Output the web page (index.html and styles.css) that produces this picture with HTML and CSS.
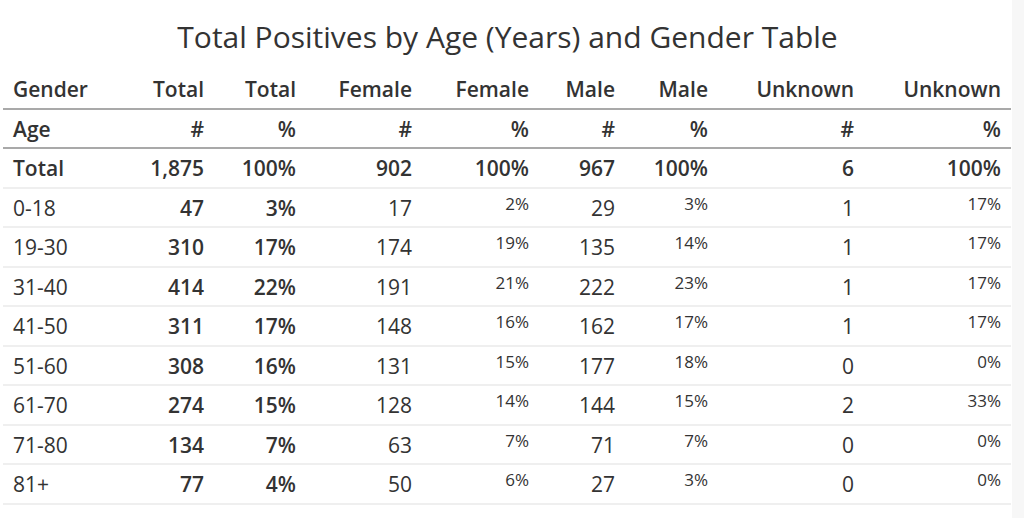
FILE: index.html
```html
<!DOCTYPE html>
<html lang="en">
<head>
<meta charset="utf-8">
<title>Total Positives by Age (Years) and Gender Table</title>
<link rel="stylesheet" href="styles.css">
</head>
<body>
<main class="panel">
  <h1 class="title">Total Positives by Age (Years) and Gender Table</h1>
  <table class="data">
    <colgroup>
      <col class="c-label">
      <col class="c-tn">
      <col class="c-tp">
      <col class="c-fn">
      <col class="c-fp">
      <col class="c-mn">
      <col class="c-mp">
      <col class="c-un">
      <col class="c-up">
    </colgroup>
    <thead>
      <tr class="hrow">
        <th class="lbl">Gender</th><th>Total</th><th>Total</th><th>Female</th><th>Female</th><th>Male</th><th>Male</th><th>Unknown</th><th>Unknown</th>
      </tr>
      <tr class="hrow">
        <th class="lbl">Age</th><th>#</th><th>%</th><th>#</th><th>%</th><th>#</th><th>%</th><th>#</th><th>%</th>
      </tr>
    </thead>
    <tbody>
      <tr class="total">
        <td class="lbl">Total</td><td>1,875</td><td>100%</td><td>902</td><td>100%</td><td>967</td><td>100%</td><td>6</td><td>100%</td>
      </tr>
      <tr>
        <td class="lbl">0-18</td><td class="b">47</td><td class="b">3%</td><td>17</td><td class="sm">2%</td><td>29</td><td class="sm">3%</td><td>1</td><td class="sm">17%</td>
      </tr>
      <tr>
        <td class="lbl">19-30</td><td class="b">310</td><td class="b">17%</td><td>174</td><td class="sm">19%</td><td>135</td><td class="sm">14%</td><td>1</td><td class="sm">17%</td>
      </tr>
      <tr>
        <td class="lbl">31-40</td><td class="b">414</td><td class="b">22%</td><td>191</td><td class="sm">21%</td><td>222</td><td class="sm">23%</td><td>1</td><td class="sm">17%</td>
      </tr>
      <tr>
        <td class="lbl">41-50</td><td class="b">311</td><td class="b">17%</td><td>148</td><td class="sm">16%</td><td>162</td><td class="sm">17%</td><td>1</td><td class="sm">17%</td>
      </tr>
      <tr>
        <td class="lbl">51-60</td><td class="b">308</td><td class="b">16%</td><td>131</td><td class="sm">15%</td><td>177</td><td class="sm">18%</td><td>0</td><td class="sm">0%</td>
      </tr>
      <tr>
        <td class="lbl">61-70</td><td class="b">274</td><td class="b">15%</td><td>128</td><td class="sm">14%</td><td>144</td><td class="sm">15%</td><td>2</td><td class="sm">33%</td>
      </tr>
      <tr>
        <td class="lbl">71-80</td><td class="b">134</td><td class="b">7%</td><td>63</td><td class="sm">7%</td><td>71</td><td class="sm">7%</td><td>0</td><td class="sm">0%</td>
      </tr>
      <tr>
        <td class="lbl">81+</td><td class="b">77</td><td class="b">4%</td><td>50</td><td class="sm">6%</td><td>27</td><td class="sm">3%</td><td>0</td><td class="sm">0%</td>
      </tr>
    </tbody>
  </table>
</main>
</body>
</html>
```

FILE: styles.css
```css
html, body {
  margin: 0;
  padding: 0;
}

body {
  background: #f7f7f7;
  font-family: "Open Sans", "Noto Sans", "Liberation Sans", sans-serif;
  color: #333333;
}

.panel {
  width: 1012px;
  height: 518px;
  box-sizing: border-box;
  background: #ffffff;
  padding: 0 0 0 3px;
}

.title {
  margin: 0;
  height: 70px;
  box-sizing: border-box;
  padding-top: 16px;
  font-size: 30px;
  line-height: 42px;
  font-weight: 400;
  text-align: center;
  color: #333333;
}

.data {
  width: 1008px;
  border-collapse: collapse;
  table-layout: fixed;
  font-size: 21px;
  line-height: 24px;
}

.c-label { width: 120px; }
.c-tn { width: 91px; }
.c-tp { width: 92px; }
.c-fn { width: 116px; }
.c-fp { width: 117px; }
.c-mn { width: 86px; }
.c-mp { width: 93px; }
.c-un { width: 146px; }
.c-up { width: 147px; }

.data th,
.data td {
  padding: 7px 10px 6.5px;
  text-align: right;
  white-space: nowrap;
}

.data th {
  font-weight: 600;
  border-bottom: 2px solid #a9a9a9;
}

.data td {
  font-weight: 400;
  border-bottom: 2px solid #efefef;
}

.data .lbl {
  text-align: left;
}

.total td {
  font-weight: 600;
}

.data td.b {
  font-weight: 600;
}

.data td.sm {
  font-size: 17px;
  vertical-align: top;
  padding-top: 3px;
}
```
